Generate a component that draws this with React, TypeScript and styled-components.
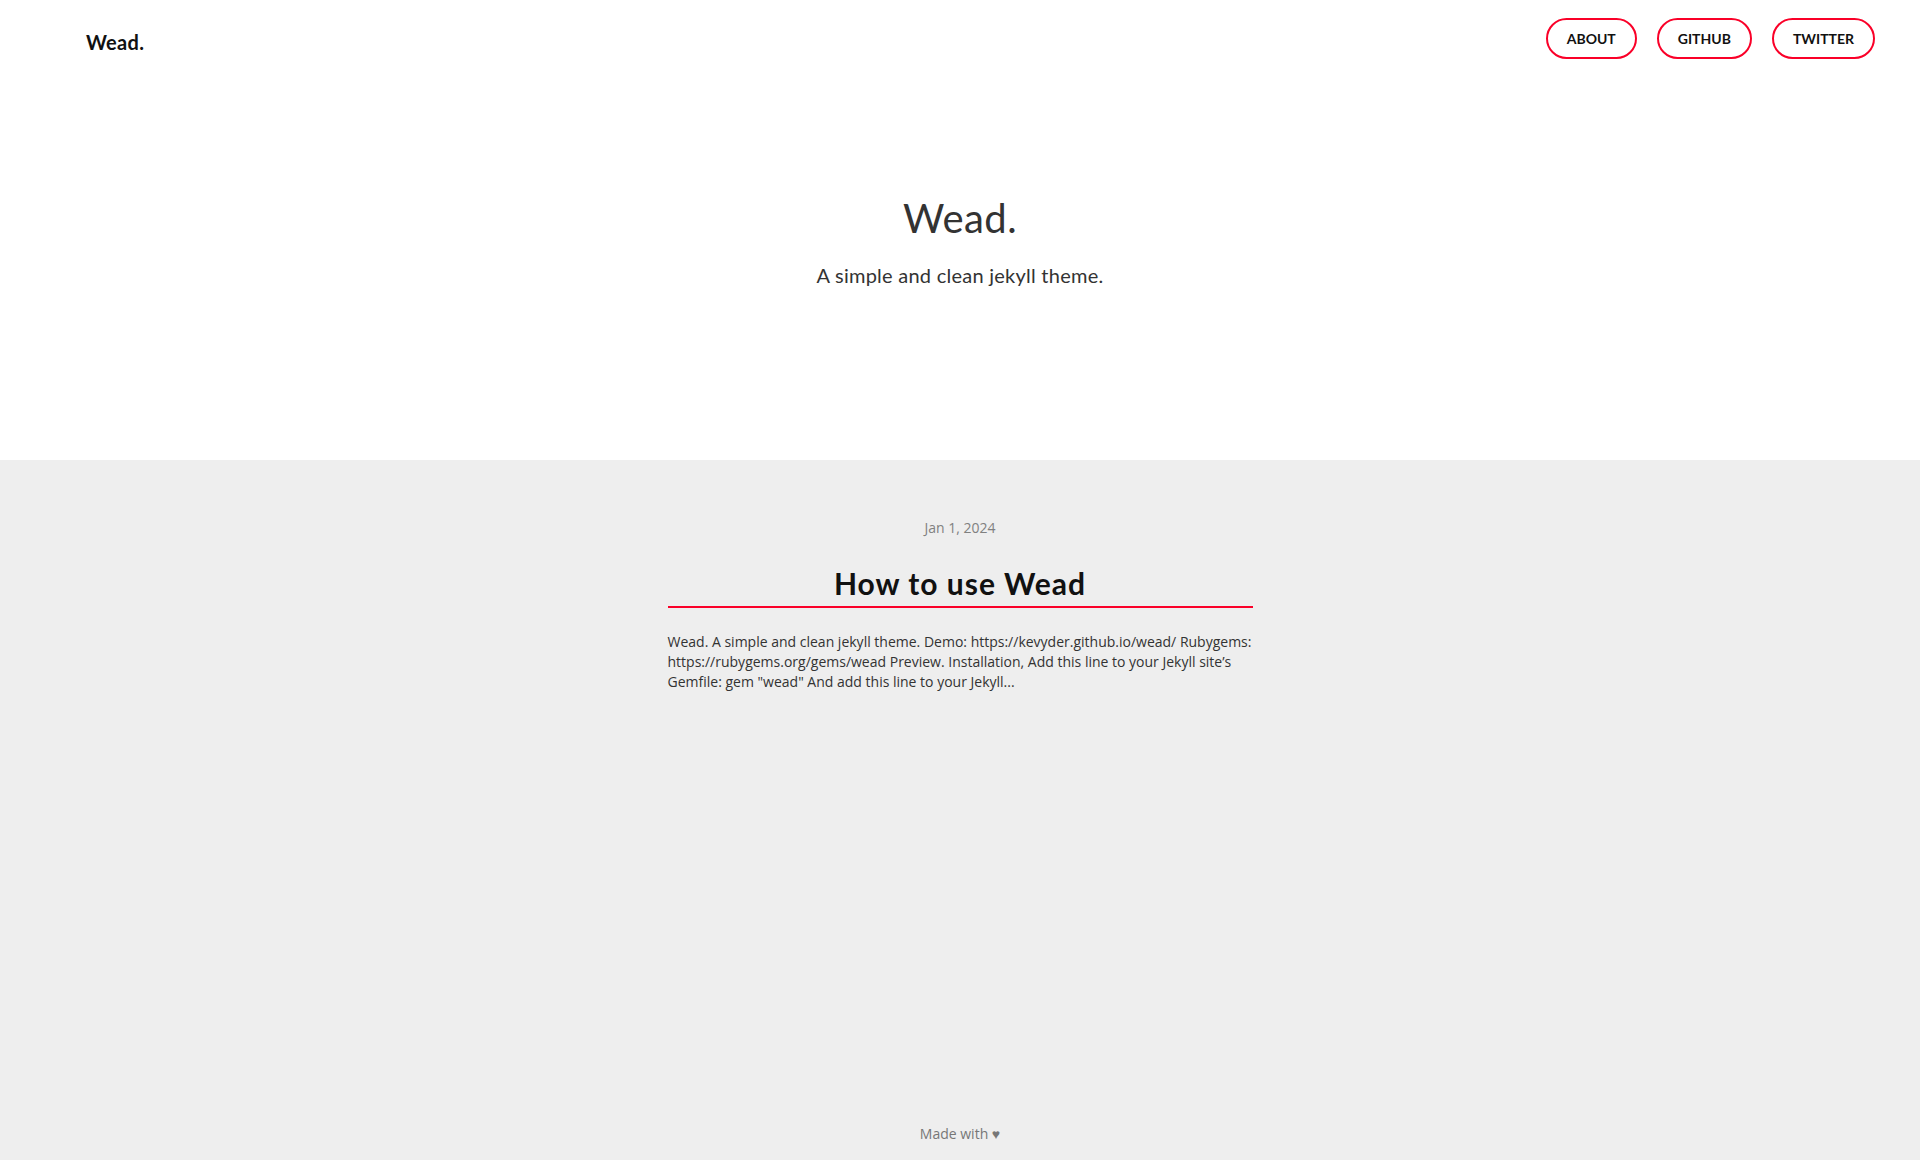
import styled, { createGlobalStyle } from 'styled-components'

const GlobalStyle = createGlobalStyle`
    html, body {
        margin: 0;
        padding: 0;
        background: #fff;
    }
    body {
        font-family: "Open Sans", "Liberation Sans", sans-serif;
    }
    #root {
        min-height: 100vh;
        display: flex;
        flex-direction: column;
    }
`

const heading = `"Lato", "Noto Sans", "Liberation Sans", sans-serif`

type NavLink = {
    label: string;
    href: string;
}

const links: NavLink[] = [
    { label: 'ABOUT', href: '#about' },
    { label: 'GITHUB', href: '#github' },
    { label: 'TWITTER', href: '#twitter' },
]

const Header = styled.header`
    background: #fff;
`

const Nav = styled.nav`
    display: flex;
    justify-content: space-between;
    align-items: flex-start;
    padding: 18px 45px 0 86px;
`

const Logo = styled.a`
    margin-top: 12px;
    font-family: ${heading};
    font-weight: 700;
    font-size: 20px;
    letter-spacing: 0.3px;
    color: #111;
    text-decoration: none;
`

const Links = styled.div`
    display: flex;
    gap: 20px;
`

const PillButton = styled.a`
    display: inline-flex;
    align-items: center;
    height: 41px;
    box-sizing: border-box;
    padding: 0 19px;
    border: 2px solid #fa0028;
    border-radius: 21px;
    font-family: ${heading};
    font-weight: 700;
    font-size: 14px;
    color: #111;
    text-decoration: none;
`

const Hero = styled.section`
    padding: 135px 0 173px;
    text-align: center;

    h1 {
        margin: 0;
        font-family: ${heading};
        font-weight: 400;
        font-size: 40px;
        line-height: 48px;
        letter-spacing: 0.4px;
        color: #333;
    }
    p {
        margin: 21px 0 0;
        font-family: ${heading};
        font-size: 20px;
        line-height: 24px;
        letter-spacing: 0.25px;
        color: #333;
    }
`

const Main = styled.main`
    flex: 1;
    display: flex;
    flex-direction: column;
    align-items: center;
    background: #eee;
    padding-top: 58px;
`

const Post = styled.article`
    width: 585px;
`

const PostDate = styled.div`
    text-align: center;
    font-size: 14px;
    line-height: 20px;
    color: #808080;
`

const PostTitle = styled.h2`
    margin: 27px 0 0;
    padding-bottom: 5px;
    border-bottom: 2px solid #fa0028;
    text-align: center;
    font-family: ${heading};
    font-weight: 700;
    font-size: 30px;
    line-height: 1.2;
    letter-spacing: 1px;
    color: #111;
`

const Excerpt = styled.p`
    margin: 24px 0 0;
    font-size: 14px;
    line-height: 20px;
    color: #333;
`

const Footer = styled.footer`
    margin-top: auto;
    padding-bottom: 16px;
    font-size: 14px;
    line-height: 20px;
    color: #777;
`

export default function App() {
    return (
        <>
            <GlobalStyle />
            <Header>
                <Nav>
                    <Logo href="#">Wead.</Logo>
                    <Links>
                        {links.map(link => (
                            <PillButton key={link.label} href={link.href}>{link.label}</PillButton>
                        ))}
                    </Links>
                </Nav>
                <Hero>
                    <h1>Wead.</h1>
                    <p>A simple and clean jekyll theme.</p>
                </Hero>
            </Header>
            <Main>
                <Post>
                    <PostDate>Jan 1, 2024</PostDate>
                    <PostTitle>How to use Wead</PostTitle>
                    <Excerpt>
                        Wead. A simple and clean jekyll theme. Demo: https://kevyder.github.io/wead/ Rubygems:
                        https://rubygems.org/gems/wead Preview. Installation, Add this line to your Jekyll site’s
                        Gemfile: gem "wead" And add this line to your Jekyll...
                    </Excerpt>
                </Post>
                <Footer>Made with ♥</Footer>
            </Main>
        </>
    )
}
